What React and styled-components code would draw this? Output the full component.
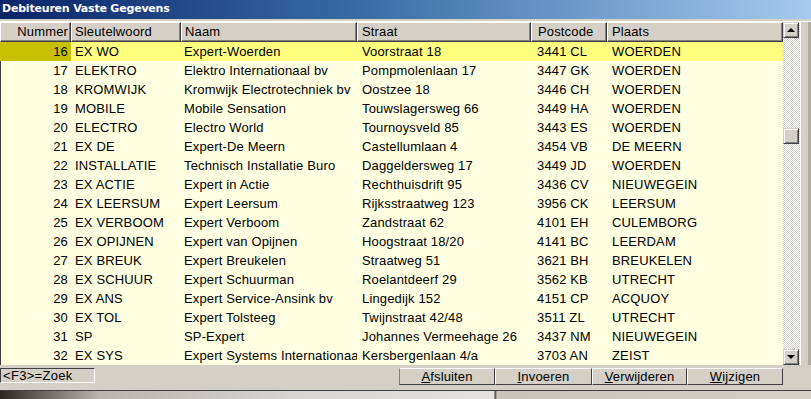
import React from 'react'
import styled, { createGlobalStyle } from 'styled-components'

const Global = createGlobalStyle`
	html, body { margin: 0; padding: 0; background: #d4d0c8; }
	body { font-family: "Liberation Sans", Arial, sans-serif; }
`

const Window = styled.div`
	width: 811px;
	height: 399px;
	overflow: hidden;
	display: flex;
	flex-direction: column;
	background: #d4d0c8;
`
const TitleBar = styled.div`
	height: 19px;
	flex-shrink: 0;
	background: linear-gradient(to right, #0a246a 0%, #3a6ea5 45%, #a6caf0 100%);
	color: #fff;
	font-family: "DejaVu Sans", Tahoma, sans-serif;
	font-weight: bold;
	font-size: 11px;
	line-height: 18px;
	padding-left: 2px;
	letter-spacing: -0.2px;
`
const TopStrip = styled.div`
	height: 3px;
	flex-shrink: 0;
	background: #d4d0c8;
	border-bottom: 1px solid #fff;
	box-sizing: border-box;
`
const Main = styled.div`
	display: flex;
	height: 343px;
	flex-shrink: 0;
`
const Grid = styled.div`
	width: 783px;
	display: flex;
	flex-direction: column;
	font-size: 13px;
	letter-spacing: 0.15px;
	color: #000;
`
const cols = '71px 110px 176px 174px 76px 176px'
const HeaderRow = styled.div`
	display: grid;
	grid-template-columns: ${cols};
	height: 20px;
`
const HeaderCell = styled.div`
	box-sizing: border-box;
	border-top: 1px solid #fff;
	border-left: 1px solid #fff;
	border-right: 1px solid #404040;
	border-bottom: 1px solid #404040;
	box-shadow: inset -1px -1px 0 #808080;
	line-height: 18px;
	padding: 0 ${p => (p.$right ? '2px' : '0')} 0 ${p => p.$pad || 3}px;
	text-align: ${p => (p.$right ? 'right' : 'left')};
	white-space: nowrap;
	overflow: hidden;
`
const Row = styled.div`
	display: grid;
	grid-template-columns: ${cols};
	height: 19px;
	line-height: 19px;
	background: ${p => (p.$active ? '#ffff80' : '#ffffe1')};
	box-shadow: inset 1px 0 0 #404040;
`
const Cell = styled.div`
	padding: 0 ${p => (p.$right ? '3px' : '0')} 0 ${p => p.$pad || 4}px;
	text-align: ${p => (p.$right ? 'right' : 'left')};
	white-space: nowrap;
	overflow: hidden;
	background: ${p => (p.$mark ? '#c8c000' : 'transparent')};
`
const Scrollbar = styled.div`
	width: 17px;
	display: flex;
	flex-direction: column;
	background: repeating-conic-gradient(#d4d0c8 0 25%, #ffffff 0 50%) 0 0 / 2px 2px;
`
const ScrollButton = styled.div`
	height: 16px;
	width: 16px;
	flex-shrink: 0;
	margin-top: ${p => p.$top || 0}px;
	box-sizing: border-box;
	background: #d4d0c8;
	border-top: 1px solid #d4d0c8;
	border-left: 1px solid #d4d0c8;
	border-right: 1px solid #404040;
	border-bottom: 1px solid #404040;
	box-shadow: inset 1px 1px 0 #fff, inset -1px -1px 0 #808080;
	display: flex;
	align-items: center;
	justify-content: center;
`
const Spacer = styled.div`
	flex: 1;
`
const Arrow = styled.div`
	width: 0;
	height: 0;
	border-left: 4px solid transparent;
	border-right: 4px solid transparent;
	${p => (p.$down ? 'border-top: 4px solid #000;' : 'border-bottom: 4px solid #000;')}
`
const RightFrame = styled.div`
	flex: 1;
	background: #d4d0c8;
	border-left: 1px solid #fff;
	box-shadow: inset -3px 0 0 #b0aca4;
`
const Footer = styled.div`
	height: 20px;
	flex-shrink: 0;
	display: flex;
	align-items: flex-start;
	padding-top: 3px;
	box-sizing: border-box;
	font-size: 13px;
`
const SearchBox = styled.div`
	width: 95px;
	height: 15px;
	box-sizing: border-box;
	border-top: 1px solid #404040;
	border-left: 1px solid #404040;
	border-bottom: 1px solid #fff;
	border-right: 1px solid #fff;
	line-height: 13px;
	padding-left: 2px;
	letter-spacing: 0.3px;
`
const Buttons = styled.div`
	display: flex;
	margin-left: 304px;
`
const Button = styled.div`
	width: ${p => p.$w}px;
	height: 17px;
	box-sizing: border-box;
	border-top: 1px solid #fff;
	border-left: 1px solid #fff;
	border-right: 1px solid #404040;
	border-bottom: 1px solid #404040;
	text-align: center;
	line-height: 15px;
	letter-spacing: 0.15px;
	&:first-child { border-left-color: #808080; }
`
const Bottom = styled.div`
	flex: 1;
	display: flex;
	flex-direction: column;
`
const BottomFrame = styled.div`
	height: 5px;
	background: #d4d0c8;
	border-bottom: 1px solid #404040;
`
const Desktop = styled.div`
	flex: 1;
	background: linear-gradient(to right, #2c2420 0px, #5a524c 30px, #b8b4ae 100px, #d8d6d2 300px, #e4e2de 494px, #3a3a3a 495px, #c8c4bc 497px, #d4d0c8 811px);
`

const rows = [
	[16, 'EX WO', 'Expert-Woerden', 'Voorstraat 18', '3441 CL', 'WOERDEN'],
	[17, 'ELEKTRO', 'Elektro Internationaal bv', 'Pompmolenlaan 17', '3447 GK', 'WOERDEN'],
	[18, 'KROMWIJK', 'Kromwijk Electrotechniek bv', 'Oostzee 18', '3446 CH', 'WOERDEN'],
	[19, 'MOBILE', 'Mobile Sensation', 'Touwslagersweg 66', '3449 HA', 'WOERDEN'],
	[20, 'ELECTRO', 'Electro World', 'Tournoysveld 85', '3443 ES', 'WOERDEN'],
	[21, 'EX DE', 'Expert-De Meern', 'Castellumlaan 4', '3454 VB', 'DE MEERN'],
	[22, 'INSTALLATIE', 'Technisch Installatie Buro', 'Daggeldersweg 17', '3449 JD', 'WOERDEN'],
	[23, 'EX ACTIE', 'Expert in Actie', 'Rechthuisdrift 95', '3436 CV', 'NIEUWEGEIN'],
	[24, 'EX LEERSUM', 'Expert Leersum', 'Rijksstraatweg 123', '3956 CK', 'LEERSUM'],
	[25, 'EX VERBOOM', 'Expert Verboom', 'Zandstraat 62', '4101 EH', 'CULEMBORG'],
	[26, 'EX OPIJNEN', 'Expert van Opijnen', 'Hoogstraat 18/20', '4141 BC', 'LEERDAM'],
	[27, 'EX BREUK', 'Expert Breukelen', 'Straatweg 51', '3621 BH', 'BREUKELEN'],
	[28, 'EX SCHUUR', 'Expert Schuurman', 'Roelantdeerf 29', '3562 KB', 'UTRECHT'],
	[29, 'EX ANS', 'Expert Service-Ansink bv', 'Lingedijk 152', '4151 CP', 'ACQUOY'],
	[30, 'EX TOL', 'Expert Tolsteeg', 'Twijnstraat 42/48', '3511 ZL', 'UTRECHT'],
	[31, 'SP', 'SP-Expert', 'Johannes Vermeehage 26', '3437 NM', 'NIEUWEGEIN'],
	[32, 'EX SYS', 'Expert Systems Internationaal', 'Kersbergenlaan 4/a', '3703 AN', 'ZEIST'],
]

const App = () => {
	return (
		<Window>
			<Global />
			<TitleBar>Debiteuren Vaste Gegevens</TitleBar>
			<TopStrip />
			<Main>
				<Grid>
					<HeaderRow>
						<HeaderCell $right>Nummer</HeaderCell>
						<HeaderCell>Sleutelwoord</HeaderCell>
						<HeaderCell>Naam</HeaderCell>
						<HeaderCell $pad={4}>Straat</HeaderCell>
						<HeaderCell $pad={6}>Postcode</HeaderCell>
						<HeaderCell $pad={4}>Plaats</HeaderCell>
					</HeaderRow>
					{rows.map((r, i) => (
						<Row key={r[0]} $active={i === 0}>
							<Cell $right $mark={i === 0}>{r[0]}</Cell>
							<Cell>{r[1]}</Cell>
							<Cell $pad={3}>{r[2]}</Cell>
							<Cell $pad={5}>{r[3]}</Cell>
							<Cell $pad={6}>{r[4]}</Cell>
							<Cell $pad={5}>{r[5]}</Cell>
						</Row>
					))}
				</Grid>
				<Scrollbar>
					<ScrollButton><Arrow /></ScrollButton>
					<ScrollButton $top={90} />
					<Spacer />
					<ScrollButton><Arrow $down /></ScrollButton>
				</Scrollbar>
				<RightFrame />
			</Main>
			<Footer>
				<SearchBox>&lt;F3&gt;=Zoek</SearchBox>
				<Buttons>
					<Button $w={96}><u>A</u>fsluiten</Button>
					<Button $w={97}><u>I</u>nvoeren</Button>
					<Button $w={95}><u>V</u>erwijderen</Button>
					<Button $w={96}><u>W</u>ijzigen</Button>
				</Buttons>
			</Footer>
			<Bottom>
				<BottomFrame />
				<Desktop />
			</Bottom>
		</Window>
	)
}

export default App
